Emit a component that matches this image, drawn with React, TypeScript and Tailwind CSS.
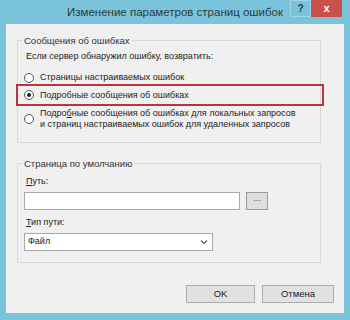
import type { ReactNode } from 'react'

const font = { fontFamily: '"Liberation Sans", Arial, sans-serif' }

function Radio({ checked }: { checked?: boolean }) {
  return (
    <span className="flex h-[10px] w-[10px] shrink-0 items-center justify-center rounded-full border border-[#555] bg-white">
      {checked && <span className="h-[4px] w-[4px] rounded-full bg-[#222]" />}
    </span>
  )
}

function Group({ title, children, className }: { title: string; children: ReactNode; className?: string }) {
  return (
    <fieldset className={`ml-[11px] w-[304px] border border-[#d9d9d9] ${className ?? ''}`}>
      <legend className="ml-[4px] px-[2px] text-[9.5px] leading-[13px] text-[#333]">{title}</legend>
      {children}
    </fieldset>
  )
}

export default function App() {
  return (
    <div className="flex h-[320px] w-[350px] flex-col bg-[#79c4da]" style={font}>
      <div className="flex h-[24px] shrink-0 items-start">
        <div className="w-[60px] shrink-0" />
        <div className="min-w-0 flex-1 whitespace-nowrap pt-[3px] text-center text-[11.5px] leading-[18px] text-[#2d3a40]">
          Изменение параметров страниц ошибок
        </div>
        <div className="flex h-[17px] w-[21px] shrink-0 items-center justify-center border border-[#9fd6e6] text-[10px] font-bold text-[#1d3a4a]">
          ?
        </div>
        <div className="mr-[8px] flex h-[17px] w-[31px] shrink-0 items-center justify-center bg-[#c9514a] text-[11px] font-bold text-white">
          x
        </div>
      </div>

      <div className="mx-[6px] mb-[7px] flex flex-1 flex-col bg-[#f0f0f0] pt-[10px] text-[9px]">
        <Group title="Сообщения об ошибках" className="h-[109px]">
          <div className="ml-[8px] mt-[3px] leading-[13px] text-[#222]">
            Если сервер обнаружил ошибку, возвратить:
          </div>
          <div className="mt-[8px] flex items-center gap-[6px] pl-[6px] leading-[13px] text-[#222]">
            <Radio />
            <span className="whitespace-nowrap">Страницы настраиваемых ошибок</span>
          </div>
          <div className="-ml-[2px] -mr-[4px] flex h-[22px] items-center gap-[6px] border-2 border-[#b8343f] pl-[6px] leading-[13px] text-[#222]">
            <Radio checked />
            <span className="whitespace-nowrap">
              По<span className="underline">д</span>робные сообщения об ошибках
            </span>
          </div>
          <div className="mt-[2px] flex items-center gap-[6px] pl-[6px] leading-[11px] text-[#222]">
            <Radio />
            <span className="whitespace-nowrap">
              Подро<span className="underline">б</span>ные сообщения об ошибках для локальных запросов
              <br />и страниц настраиваемых ошибок для удаленных запросов
            </span>
          </div>
        </Group>

        <Group title="Страница по умолчанию" className="mt-[14px] h-[106px]">
          <div className="ml-[8px] mt-[5px] leading-[13px] text-[#222]">
            <span className="underline">П</span>уть:
          </div>
          <div className="ml-[6px] mt-[4px] flex items-center gap-[6px]">
            <div className="h-[18px] w-[216px] border border-[#a9a9a9] bg-white" />
            <div className="flex h-[18px] w-[22px] items-center justify-center border border-[#9a9a9a] bg-[#dedede] pb-[4px] text-[9px] text-[#444]">
              ...
            </div>
          </div>
          <div className="ml-[8px] mt-[6px] leading-[13px] text-[#222]">
            <span className="underline">Т</span>ип пути:
          </div>
          <div className="ml-[6px] mt-[4px] flex h-[18px] w-[189px] items-center justify-between border border-[#a9a9a9] bg-white pl-[3px] pr-[4px] text-[#222]">
            <span>Файл</span>
            <svg width="8" height="6" viewBox="0 0 8 6" fill="none">
              <path d="M1 1.5 L4 4.5 L7 1.5" stroke="#555" strokeWidth="1.2" />
            </svg>
          </div>
        </Group>

        <div className="mt-[22px] flex justify-end gap-[7px] pr-[10px] text-[9.5px]">
          <div className="flex h-[18px] w-[69px] items-center justify-center border border-[#adadad] bg-[#e1e1e1] text-[#222]">
            OK
          </div>
          <div className="flex h-[18px] w-[72px] items-center justify-center border border-[#adadad] bg-[#e1e1e1] text-[#222]">
            Отмена
          </div>
        </div>
      </div>
    </div>
  )
}
